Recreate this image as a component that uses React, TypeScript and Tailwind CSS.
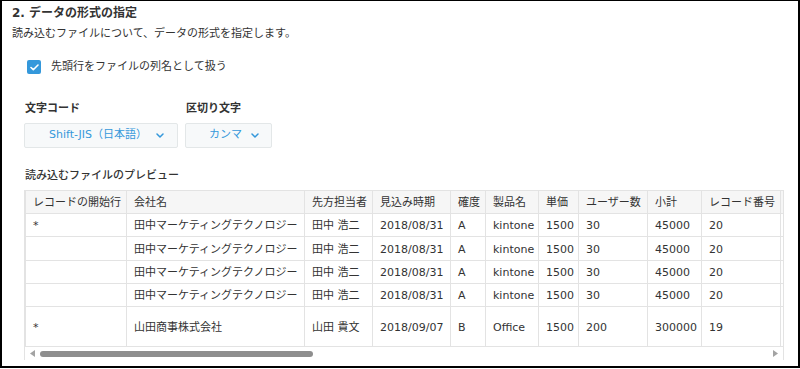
import React from "react";

const cols = [101, 178, 68, 78, 35, 53, 40, 69, 54, 79, 60];
const headers = ["レコードの開始行", "会社名", "先方担当者", "見込み時期", "確度", "製品名", "単価", "ユーザー数", "小計", "レコード番号", ""];

const tanaka = ["", "田中マーケティングテクノロジー", "田中 浩二", "2018/08/31", "A", "kintone", "1500", "30", "45000", "20", ""];
const rows: { cells: string[]; h: string }[] = [
  { cells: ["*", ...tanaka.slice(1)], h: "h-[23px]" },
  { cells: tanaka, h: "h-[24px]" },
  { cells: tanaka, h: "h-[23px]" },
  { cells: tanaka, h: "h-[23px]" },
  {
    cells: ["*", "山田商事株式会社", "山田 貴文", "2018/09/07", "B", "Office", "1500", "200", "300000", "19", ""],
    h: "h-[40px]",
  },
];

function Chevron() {
  return (
    <svg width="8" height="5" viewBox="0 0 8 5" fill="none">
      <path d="M1 1l3 3 3-3" stroke="#3498db" strokeWidth="1.5" strokeLinecap="round" strokeLinejoin="round" />
    </svg>
  );
}

export default function App() {
  return (
    <div
      className="w-[800px] h-[368px] bg-white border-2 border-t border-black overflow-hidden text-[#333]"
      style={{ fontFamily: '"DejaVu Sans", "Noto Sans CJK JP", sans-serif' }}
    >
      <div className="pl-[10px]">
        {/* Title */}
        <h2 className="mt-[4px] text-[12px] leading-[16px] font-bold">2. データの形式の指定</h2>
        <p className="mt-[5px] text-[11px] leading-[16px]">読み込むファイルについて、データの形式を指定します。</p>

        {/* Checkbox */}
        <label className="mt-[17px] ml-[15px] flex items-center gap-[10px] text-[11px] leading-[16px]">
          <span className="w-[14px] h-[14px] rounded-[2px] bg-[#3498db] flex items-center justify-center">
            <svg width="9" height="7" viewBox="0 0 9 7" fill="none">
              <path d="M1 3.5l2.3 2.2L8 1" stroke="white" strokeWidth="1.6" strokeLinecap="round" strokeLinejoin="round" />
            </svg>
          </span>
          先頭行をファイルの列名として扱う
        </label>

        {/* Selects */}
        <div className="mt-[26px] ml-[12px] flex gap-[7px]">
          <div className="flex flex-col gap-[6px]">
            <span className="pl-[1px] text-[11px] leading-[16px] font-bold">文字コード</span>
            <div className="w-[154px] h-[25px] flex items-center gap-[9px] pl-[24px] bg-[#f7f9fa] border border-[#e3e7e8] rounded-[2px] text-[11px] text-[#3498db]">
              <span>Shift-JIS（日本語）</span>
              <Chevron />
            </div>
          </div>
          <div className="flex flex-col gap-[6px]">
            <span className="pl-[1px] text-[11px] leading-[16px] font-bold">区切り文字</span>
            <div className="w-[87px] h-[25px] flex items-center gap-[9px] pl-[23px] bg-[#f7f9fa] border border-[#e3e7e8] rounded-[2px] text-[11px] text-[#3498db]">
              <span>カンマ</span>
              <Chevron />
            </div>
          </div>
        </div>

        {/* Preview */}
        <p className="mt-[20px] ml-[13px] text-[11px] leading-[16px] font-medium">読み込むファイルのプレビュー</p>

        <div className="mt-[6px] ml-[12px] w-[760px] overflow-hidden border-x border-[#e3e3e3]">
          <table className="table-fixed border-collapse text-[11px] leading-[16px] w-[815px]">
            <colgroup>
              {cols.map((w, i) => (
                <col key={i} style={{ width: w }} />
              ))}
            </colgroup>
            <thead>
              <tr className="h-[23px] bg-[#f6f6f6]">
                {headers.map((h, i) => (
                  <th key={i} className="border border-[#e3e3e3] px-[7px] pt-[2px] text-left font-normal whitespace-nowrap">
                    {h}
                  </th>
                ))}
              </tr>
            </thead>
            <tbody>
              {rows.map((r, ri) => (
                <tr key={ri} className={r.h}>
                  {r.cells.map((c, ci) => (
                    <td key={ci} className="border border-[#e3e3e3] px-[7px] pt-[2px] whitespace-nowrap">
                      {c}
                    </td>
                  ))}
                </tr>
              ))}
            </tbody>
          </table>

          {/* Scrollbar */}
          <div className="h-[13px] flex items-center px-[5px] gap-[5px]">
            <svg width="5" height="7" viewBox="0 0 5 7">
              <path d="M5 0v7L0 3.5z" fill="#a3a3a3" />
            </svg>
            <div className="w-[273px] h-[6px] rounded-full bg-[#8e8e8e]" />
            <div className="flex-1" />
            <svg width="5" height="7" viewBox="0 0 5 7">
              <path d="M0 0v7l5-3.5z" fill="#a3a3a3" />
            </svg>
          </div>
        </div>
      </div>
    </div>
  );
}
